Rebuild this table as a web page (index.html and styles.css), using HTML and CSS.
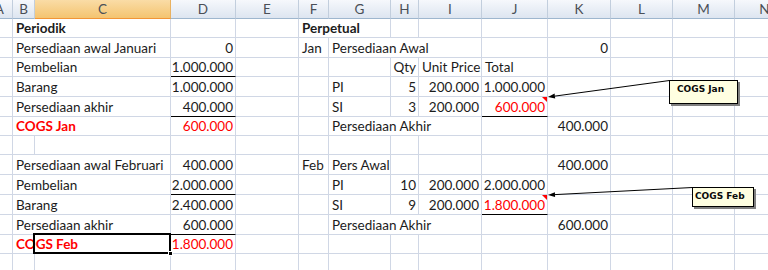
FILE: index.html
```html
<!DOCTYPE html>
<html>
<head>
<meta charset="utf-8">
<link rel="stylesheet" href="styles.css">
</head>
<body>
<div class="sheet">
  <!-- header -->
  <div class="h a">A</div><div class="h">B</div><div class="h act">C</div><div class="h">D</div><div class="h">E</div><div class="h">F</div><div class="h">G</div><div class="h">H</div><div class="h">I</div><div class="h">J</div><div class="h">K</div><div class="h">L</div><div class="h">M</div><div class="h">N</div>
  <!-- row 1 -->
  <div class="c"></div><div class="c s2 b">Periodik</div><div class="c"></div><div class="c"></div><div class="c s2 b">Perpetual</div><div class="c"></div><div class="c"></div><div class="c"></div><div class="c"></div><div class="c"></div><div class="c"></div><div class="c"></div>
  <!-- row 2 -->
  <div class="c"></div><div class="c s2">Persediaan awal Januari</div><div class="c r">0</div><div class="c"></div><div class="c">Jan</div><div class="c s3">Persediaan Awal</div><div class="c"></div><div class="c r">0</div><div class="c"></div><div class="c"></div><div class="c"></div>
  <!-- row 3 -->
  <div class="c"></div><div class="c s2">Pembelian</div><div class="c r bb">1.000.000</div><div class="c"></div><div class="c"></div><div class="c"></div><div class="c r">Qty</div><div class="c">Unit Price</div><div class="c">Total</div><div class="c"></div><div class="c"></div><div class="c"></div><div class="c"></div>
  <!-- row 4 -->
  <div class="c"></div><div class="c s2">Barang</div><div class="c r">1.000.000</div><div class="c"></div><div class="c"></div><div class="c">PI</div><div class="c r">5</div><div class="c r">200.000</div><div class="c r">1.000.000</div><div class="c"></div><div class="c"></div><div class="c"></div><div class="c"></div>
  <!-- row 5 -->
  <div class="c"></div><div class="c s2">Persediaan akhir</div><div class="c r bb">400.000</div><div class="c"></div><div class="c"></div><div class="c">SI</div><div class="c r">3</div><div class="c r">200.000</div><div class="c r red bb cm">600.000</div><div class="c"></div><div class="c"></div><div class="c"></div><div class="c"></div>
  <!-- row 6 -->
  <div class="c"></div><div class="c s2 b red">COGS Jan</div><div class="c r red">600.000</div><div class="c"></div><div class="c"></div><div class="c s3">Persediaan Akhir</div><div class="c"></div><div class="c r">400.000</div><div class="c"></div><div class="c"></div><div class="c"></div>
  <!-- row 7 -->
  <div class="c"></div><div class="c"></div><div class="c"></div><div class="c"></div><div class="c"></div><div class="c"></div><div class="c"></div><div class="c"></div><div class="c"></div><div class="c"></div><div class="c"></div><div class="c"></div><div class="c"></div><div class="c"></div>
  <!-- row 8 -->
  <div class="c"></div><div class="c s2">Persediaan awal Februari</div><div class="c r">400.000</div><div class="c"></div><div class="c">Feb</div><div class="c">Pers Awal</div><div class="c"></div><div class="c"></div><div class="c"></div><div class="c r">400.000</div><div class="c"></div><div class="c"></div><div class="c"></div>
  <!-- row 9 -->
  <div class="c"></div><div class="c s2">Pembelian</div><div class="c r bb">2.000.000</div><div class="c"></div><div class="c"></div><div class="c">PI</div><div class="c r">10</div><div class="c r">200.000</div><div class="c r">2.000.000</div><div class="c"></div><div class="c"></div><div class="c"></div><div class="c"></div>
  <!-- row 10 -->
  <div class="c"></div><div class="c s2">Barang</div><div class="c r">2.400.000</div><div class="c"></div><div class="c"></div><div class="c">SI</div><div class="c r">9</div><div class="c r">200.000</div><div class="c r red bb cm">1.800.000</div><div class="c"></div><div class="c"></div><div class="c"></div><div class="c"></div>
  <!-- row 11 -->
  <div class="c"></div><div class="c s2">Persediaan akhir</div><div class="c r bb">600.000</div><div class="c"></div><div class="c"></div><div class="c s3">Persediaan Akhir</div><div class="c"></div><div class="c r">600.000</div><div class="c"></div><div class="c"></div><div class="c"></div>
  <!-- row 12 -->
  <div class="c"></div><div class="c s2 b red sel">COGS Feb</div><div class="c r red">1.800.000</div><div class="c"></div><div class="c"></div><div class="c"></div><div class="c"></div><div class="c"></div><div class="c"></div><div class="c"></div><div class="c"></div><div class="c"></div><div class="c"></div>
  <!-- row 13 -->
  <div class="c"></div><div class="c"></div><div class="c"></div><div class="c"></div><div class="c"></div><div class="c"></div><div class="c"></div><div class="c"></div><div class="c"></div><div class="c"></div><div class="c"></div><div class="c"></div><div class="c"></div><div class="c"></div>

  <svg class="arrows" width="768" height="270" viewBox="0 0 768 270">
    <line x1="669.5" y1="80.5" x2="554.9" y2="96.1" stroke="#000" stroke-width="1"/>
    <polygon points="548,97 555.2,98.5 554.6,93.6" fill="#000"/>
    <line x1="692.5" y1="187.5" x2="555" y2="194.6" stroke="#000" stroke-width="1"/>
    <polygon points="548,195 555.1,197.1 554.9,192.2" fill="#000"/>
  </svg>
  <div class="note note-jan">COGS Jan</div>
  <div class="note note-feb">COGS Feb</div>
</div>
</body>
</html>
```

FILE: styles.css
```css
html, body {
  margin: 0;
  padding: 0;
  background: #ffffff;
  overflow: hidden;
}

.sheet {
  position: relative;
  display: grid;
  grid-template-columns: 13px 22px 136px 65px 63px 30px 62px 28px 63px 66px 63px 62px 62px 60px;
  grid-template-rows: 19px 19px 20px 19px 20px 20px 19px 19px 20px 20px 20px 20px 19px 20px;
  width: 768px;
  height: 270px;
  overflow: hidden;
  font-family: Lato, "Liberation Sans", sans-serif;
  font-size: 13.5px;
  color: #1c1c1c;
}

.h {
  box-sizing: border-box;
  display: flex;
  align-items: center;
  justify-content: center;
  background: linear-gradient(#f6f8fc, #dde5f0);
  border-right: 1px solid #c2cedd;
  border-bottom: 1px solid #9eb6ce;
  color: #4a4f57;
  line-height: 16px;
  white-space: nowrap;
}

.h.a {
  justify-content: flex-end;
  padding-right: 8px;
}

.h.act {
  background: linear-gradient(#fadca6, #f4c470);
  border-bottom-color: #f29536;
  border-right-color: #e9b160;
}

.c {
  box-sizing: border-box;
  position: relative;
  display: flex;
  align-items: flex-end;
  padding: 0 2px 1px 3px;
  border-right: 1px solid #d0d7e5;
  border-bottom: 1px solid #d0d7e5;
  line-height: 16px;
  white-space: nowrap;
}

.s2 { grid-column: span 2; }
.s3 { grid-column: span 3; }
.r { justify-content: flex-end; }
.b { font-weight: 700; }
.red { color: #ff0000; }
.bb { border-bottom-color: #000000; }

.cm::after {
  content: "";
  position: absolute;
  top: 0;
  right: 0;
  border-top: 5px solid #ff0000;
  border-left: 5px solid transparent;
}

.sel::after {
  content: "";
  position: absolute;
  left: 20px;
  right: -1px;
  top: -2px;
  bottom: -1px;
  border: 2px solid #000000;
}

.sel::before {
  content: "";
  position: absolute;
  right: -3px;
  bottom: -3px;
  width: 5px;
  height: 5px;
  background: #000000;
  border: 1px solid #ffffff;
  box-sizing: border-box;
  z-index: 1;
}

.arrows {
  position: absolute;
  left: 0;
  top: 0;
  pointer-events: none;
}

.note {
  position: absolute;
  box-sizing: border-box;
  background: #ffffe1;
  border: 1px solid #000000;
  box-shadow: 2px 2px 0 #808080;
  font-family: "DejaVu Sans", Verdana, sans-serif;
  font-weight: 700;
  font-size: 9px;
  line-height: 11px;
  color: #0a0a0a;
  white-space: nowrap;
}

.note-jan {
  left: 669px;
  top: 80px;
  width: 69px;
  height: 24px;
  padding: 3px 0 0 7px;
}

.note-feb {
  left: 692px;
  top: 187px;
  width: 62px;
  height: 20px;
  padding: 3px 0 0 2px;
}
```
